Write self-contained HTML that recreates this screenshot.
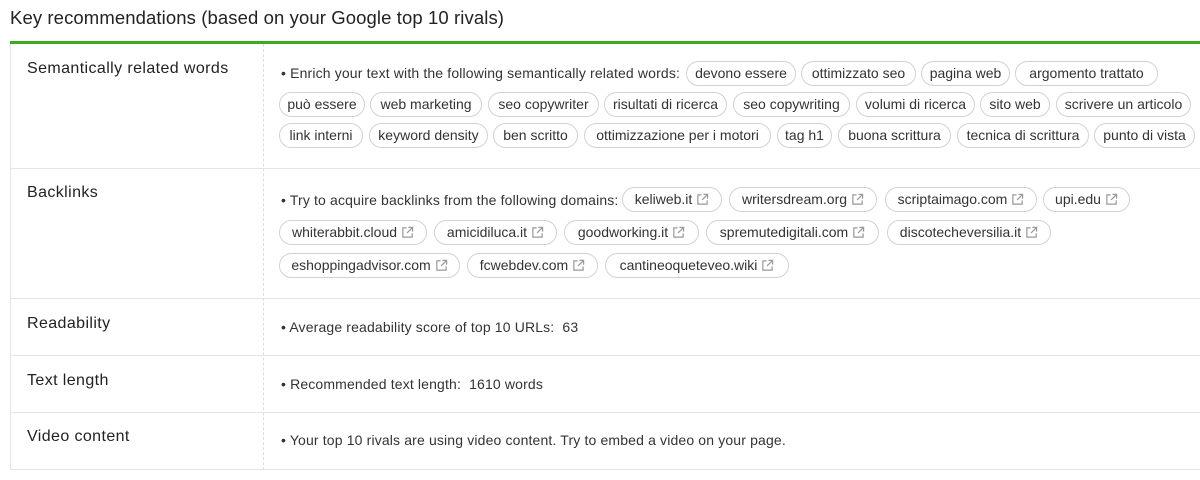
<!DOCTYPE html>
<html><head><meta charset="utf-8"><style>
*{margin:0;padding:0;box-sizing:border-box}
body{width:1200px;height:480px;background:#fff;font-family:"Liberation Sans",sans-serif;color:#333;position:relative;overflow:hidden}
.t{position:absolute;left:10px;top:7px;font-size:18.5px;color:#222;letter-spacing:0.1px}
.g{position:absolute;left:10px;top:41px;width:1200px;height:3px;background:#3aad1e}
.box{position:absolute;left:10px;top:44px;width:1200px;height:426px;border-left:1px solid #e4e4e4;border-bottom:1px solid #e4e4e4}
.vd{position:absolute;left:263px;top:44px;height:426px;border-left:1px dashed #ddd}
.hl{position:absolute;left:10px;width:1200px;border-top:1px solid #e4e4e4}
.lab{position:absolute;left:27px;font-size:16px;color:#222;letter-spacing:0.4px}
.txt{position:absolute;left:281px;font-size:14px;color:#333;letter-spacing:0.15px;white-space:nowrap}
.p{position:absolute;height:25px;border:1px solid #d2d2d2;border-radius:13px;font-size:14px;line-height:23px;text-align:center;white-space:nowrap;letter-spacing:0;color:#333;overflow:hidden}
.p svg{vertical-align:-2px;margin-left:4px}
</style></head><body>
<div class="t">Key recommendations (based on your Google top 10 rivals)</div>
<div class="g"></div>
<div class="box"></div>
<div class="vd"></div>
<div class="hl" style="top:168px"></div>
<div class="hl" style="top:298px"></div>
<div class="hl" style="top:355px"></div>
<div class="hl" style="top:412px"></div>

<div class="lab" style="top:60px">Semantically related words</div>
<div class="lab" style="top:184px">Backlinks</div>
<div class="lab" style="top:315px">Readability</div>
<div class="lab" style="top:372px">Text length</div>
<div class="lab" style="top:428px">Video content</div>

<div class="txt" style="top:65px">• Enrich your text with the following semantically related words:</div>
<div class="p" style="top:61px;left:686px;width:110px">devono essere</div>
<div class="p" style="top:61px;left:801px;width:115px">ottimizzato seo</div>
<div class="p" style="top:61px;left:921px;width:89px">pagina web</div>
<div class="p" style="top:61px;left:1015px;width:143px">argomento trattato</div>

<div class="p" style="top:92px;left:279px;width:86px">può essere</div>
<div class="p" style="top:92px;left:370px;width:112px">web marketing</div>
<div class="p" style="top:92px;left:488px;width:111px">seo copywriter</div>
<div class="p" style="top:92px;left:604px;width:123px">risultati di ricerca</div>
<div class="p" style="top:92px;left:733px;width:117px">seo copywriting</div>
<div class="p" style="top:92px;left:856px;width:119px">volumi di ricerca</div>
<div class="p" style="top:92px;left:980px;width:70px">sito web</div>
<div class="p" style="top:92px;left:1056px;width:135px">scrivere un articolo</div>

<div class="p" style="top:123px;left:279px;width:84px">link interni</div>
<div class="p" style="top:123px;left:369px;width:119px">keyword density</div>
<div class="p" style="top:123px;left:493px;width:85px">ben scritto</div>
<div class="p" style="top:123px;left:584px;width:187px">ottimizzazione per i motori</div>
<div class="p" style="top:123px;left:777px;width:55px">tag h1</div>
<div class="p" style="top:123px;left:838px;width:113px">buona scrittura</div>
<div class="p" style="top:123px;left:957px;width:132px">tecnica di scrittura</div>
<div class="p" style="top:123px;left:1094px;width:101px">punto di vista</div>

<div class="txt" style="top:192px">• Try to acquire backlinks from the following domains:</div>
<svg width="0" height="0" style="position:absolute"><defs><symbol id="e" viewBox="0 0 14 14"><path d="M6 2H2v10h10V8" fill="none" stroke="#999" stroke-width="1.3"/><path d="M8 1.5h4.5V6M12.5 1.5L6.5 7.5" fill="none" stroke="#999" stroke-width="1.3"/></symbol></defs></svg>
<div class="p" style="top:187px;left:622px;width:100px">keliweb.it<svg width="13" height="13"><use href="#e"/></svg></div>
<div class="p" style="top:187px;left:729px;width:148px">writersdream.org<svg width="13" height="13"><use href="#e"/></svg></div>
<div class="p" style="top:187px;left:885px;width:152px">scriptaimago.com<svg width="13" height="13"><use href="#e"/></svg></div>
<div class="p" style="top:187px;left:1043px;width:87px">upi.edu<svg width="13" height="13"><use href="#e"/></svg></div>

<div class="p" style="top:220px;left:279px;width:148px">whiterabbit.cloud<svg width="13" height="13"><use href="#e"/></svg></div>
<div class="p" style="top:220px;left:434px;width:123px">amicidiluca.it<svg width="13" height="13"><use href="#e"/></svg></div>
<div class="p" style="top:220px;left:564px;width:135px">goodworking.it<svg width="13" height="13"><use href="#e"/></svg></div>
<div class="p" style="top:220px;left:706px;width:173px">spremutedigitali.com<svg width="13" height="13"><use href="#e"/></svg></div>
<div class="p" style="top:220px;left:887px;width:164px">discotecheversilia.it<svg width="13" height="13"><use href="#e"/></svg></div>

<div class="p" style="top:253px;left:279px;width:181px">eshoppingadvisor.com<svg width="13" height="13"><use href="#e"/></svg></div>
<div class="p" style="top:253px;left:467px;width:131px">fcwebdev.com<svg width="13" height="13"><use href="#e"/></svg></div>
<div class="p" style="top:253px;left:605px;width:184px">cantineoqueteveo.wiki<svg width="13" height="13"><use href="#e"/></svg></div>

<div class="txt" style="top:319px">• Average readability score of top 10 URLs:&nbsp; 63</div>
<div class="txt" style="top:376px">• Recommended text length:&nbsp; 1610 words</div>
<div class="txt" style="top:432px">• Your top 10 rivals are using video content. Try to embed a video on your page.</div>
</body></html>
